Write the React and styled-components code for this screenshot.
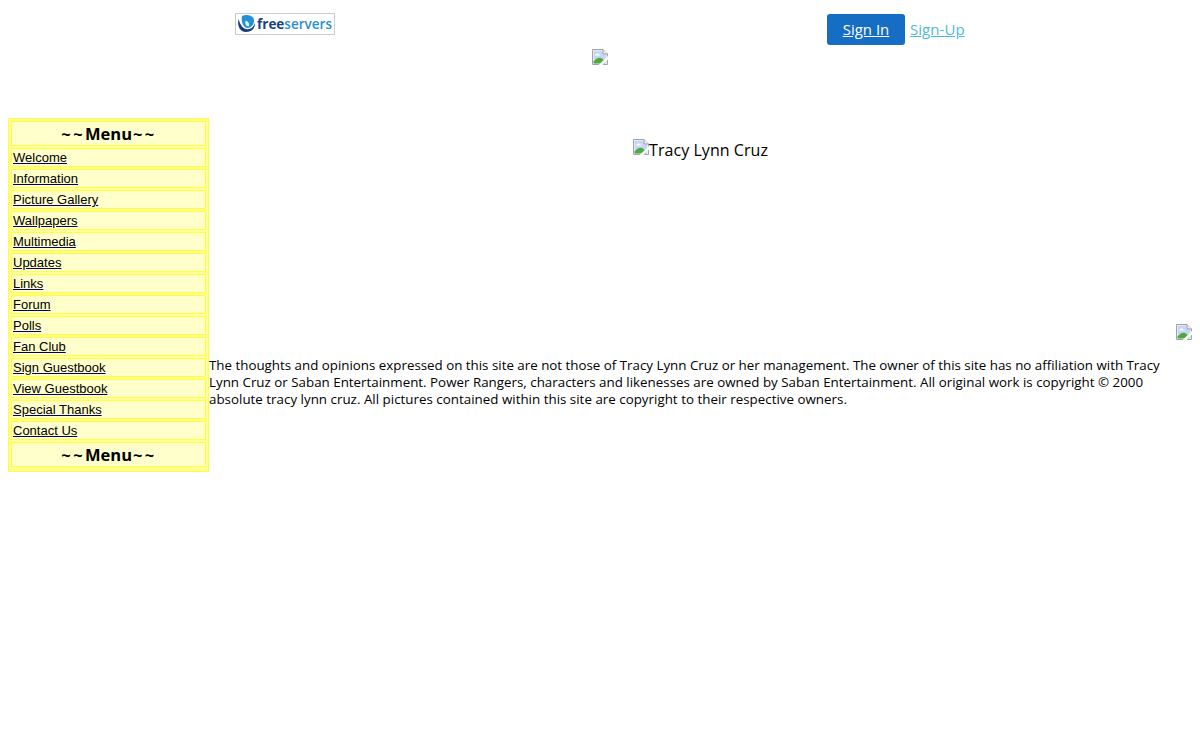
import React from 'react';
import styled, { createGlobalStyle } from 'styled-components';

const GlobalStyle = createGlobalStyle`
  body {
    margin: 0;
    background: #fff;
    color: #000;
    font-family: 'Open Sans', 'Noto Sans', sans-serif;
  }
`;

const Page = styled.div`
  display: flex;
  flex-direction: column;
  width: 1184px;
  padding: 0 8px;
`;

const TopBar = styled.header`
  display: flex;
  justify-content: space-between;
  align-items: flex-start;
  height: 49px;
  padding: 0 227px;
`;

const LogoLink = styled.a`
  display: flex;
  margin-top: 13px;
`;

const Account = styled.nav`
  display: flex;
  align-items: center;
  gap: 5px;
  margin-top: 14px;
  font-size: 15px;
  line-height: 31px;
`;

const SignIn = styled.a`
  box-sizing: border-box;
  width: 78px;
  height: 31px;
  border-radius: 3px;
  background: #166dc4;
  color: #fff;
  text-align: center;
  text-decoration: underline;
`;

const SignUp = styled.a`
  width: 55px;
  color: #4dbbdc;
  text-decoration: underline;
  white-space: nowrap;
  letter-spacing: 0.05px;
`;

const Banner = styled.div`
  display: flex;
  justify-content: center;
  height: 69px;
`;

const Body = styled.div`
  display: flex;
  align-items: flex-start;
`;

const Menu = styled.div`
  box-sizing: border-box;
  display: flex;
  flex-direction: column;
  flex: none;
  gap: 2px;
  width: 201px;
  height: 354px;
  padding: 2px;
  border: 1px solid #ffff40;
  background: #ffff99;
`;

const MenuTitle = styled.div`
  box-sizing: border-box;
  display: flex;
  justify-content: center;
  height: 25px;
  border: 1px solid #ffff40;
  background: #ffffcc;
  font-size: 16.5px;
  font-weight: 700;
  line-height: 23px;
`;

const Tildes = styled.span`
  padding-left: 1px;
  letter-spacing: 2.4px;
`;

const MenuItem = styled.div`
  box-sizing: border-box;
  height: 19px;
  padding: 0 1px;
  border: 1px solid #ffff40;
  background: #ffffcc;
  font-family: 'Liberation Sans', Arial, sans-serif;
  font-size: 13px;
  line-height: 17px;
`;

const MenuLink = styled.a`
  color: #000;
  text-decoration: underline;
  text-decoration-color: #000066;
`;

const Content = styled.main`
  display: flex;
  flex-direction: column;
  flex: 1;
`;

const Photo = styled.div`
  display: flex;
  justify-content: center;
  height: 185px;
  padding-top: 21px;
  font-size: 16px;
  line-height: 22px;
  letter-spacing: 0.05px;
`;

const Counter = styled.div`
  display: flex;
  justify-content: flex-end;
  height: 33px;
`;

const Disclaimer = styled.p`
  margin: 0;
  font-size: 13.333px;
  line-height: 17px;
`;

const Line = styled.span`
  display: block;
  white-space: nowrap;
  letter-spacing: ${(props) => props.$spacing || 0}px;
`;

const items = [
  'Welcome',
  'Information',
  'Picture Gallery',
  'Wallpapers',
  'Multimedia',
  'Updates',
  'Links',
  'Forum',
  'Polls',
  'Fan Club',
  'Sign Guestbook',
  'View Guestbook',
  'Special Thanks',
  'Contact Us',
];

const MissingImage = () => (
  <svg width="16" height="16" viewBox="0 0 16 16">
    <path d="M.5 .5H11L15.5 5V15.5H.5Z" fill="#fff" stroke="#a3a3a3" />
    <path d="M1.5 1.5H10.5V5.5H14.5V14.5H1.5Z" fill="#c3d6f6" />
    <path d="M3 6.5Q3 5 4.5 5Q6 3.5 7 5.5Q8.5 5.5 8.5 6.5Z" fill="#fff" />
    <path d="M1.5 14.5V12.5Q6 7 10 9.5L13 12V14.5Z" fill="#4fa93c" />
    <path d="M6.5 16L16 7V10.5L10.5 16Z" fill="#fff" />
    <path d="M11 .5V5H15.5" fill="#eee" stroke="#999" />
  </svg>
);

const Logo = () => (
  <svg width="100" height="22" viewBox="0 0 100 22">
    <rect x=".5" y=".5" width="99" height="21" fill="#fff" stroke="#c9cdd0" />
    <path
      d="M3.5 6C2 13 5 19 11 19C17 19 20 15 20 10C18 15 15 17 11 16C7 15 5 11 3.5 6Z"
      fill="#153e85"
    />
    <path
      d="M7 3C11 1 16 2 18.5 5C20 9 18 14 13 15C8 15 6 9 7 3Z"
      fill="#2490d8"
    />
    <path d="M10.5 8C13 8 14.5 10 14 13C11.5 14 9.5 11 10.5 8Z" fill="#e2f5ff" />
    <text
      x="22"
      y="16"
      fontFamily="'Open Sans', sans-serif"
      fontSize="14"
      fontWeight="600"
      textLength="75"
      lengthAdjust="spacingAndGlyphs"
    >
      <tspan fill="#1c3f80" fontWeight="700">free</tspan>
      <tspan fill="#2b8fd0">servers</tspan>
    </text>
  </svg>
);

const MenuHeading = () => (
  <MenuTitle>
    <Tildes>~~</Tildes>
    Menu
    <Tildes>~~</Tildes>
  </MenuTitle>
);

const App = () => (
  <>
    <GlobalStyle />
    <Page>
      <TopBar>
        <LogoLink>
          <Logo />
        </LogoLink>
        <Account>
          <SignIn>Sign In</SignIn>
          <SignUp>Sign-Up</SignUp>
        </Account>
      </TopBar>
      <Banner>
        <MissingImage />
      </Banner>
      <Body>
        <Menu>
          <MenuHeading />
          {items.map((item) => (
            <MenuItem key={item}>
              <MenuLink>{item}</MenuLink>
            </MenuItem>
          ))}
          <MenuHeading />
        </Menu>
        <Content>
          <Photo>
            <MissingImage />
            Tracy Lynn Cruz
          </Photo>
          <Counter>
            <MissingImage />
          </Counter>
          <Disclaimer>
            <Line>
              The thoughts and opinions expressed on this site are not those of
              Tracy Lynn Cruz or her management. The owner of this site has no
              affiliation with Tracy
            </Line>
            <Line $spacing={0.012}>
              Lynn Cruz or Saban Entertainment. Power Rangers, characters and
              likenesses are owned by Saban Entertainment. All original work is
              copyright © 2000
            </Line>
            <Line $spacing={0.02}>
              absolute tracy lynn cruz. All pictures contained within this site
              are copyright to their respective owners.
            </Line>
          </Disclaimer>
        </Content>
      </Body>
    </Page>
  </>
);

export default App;
